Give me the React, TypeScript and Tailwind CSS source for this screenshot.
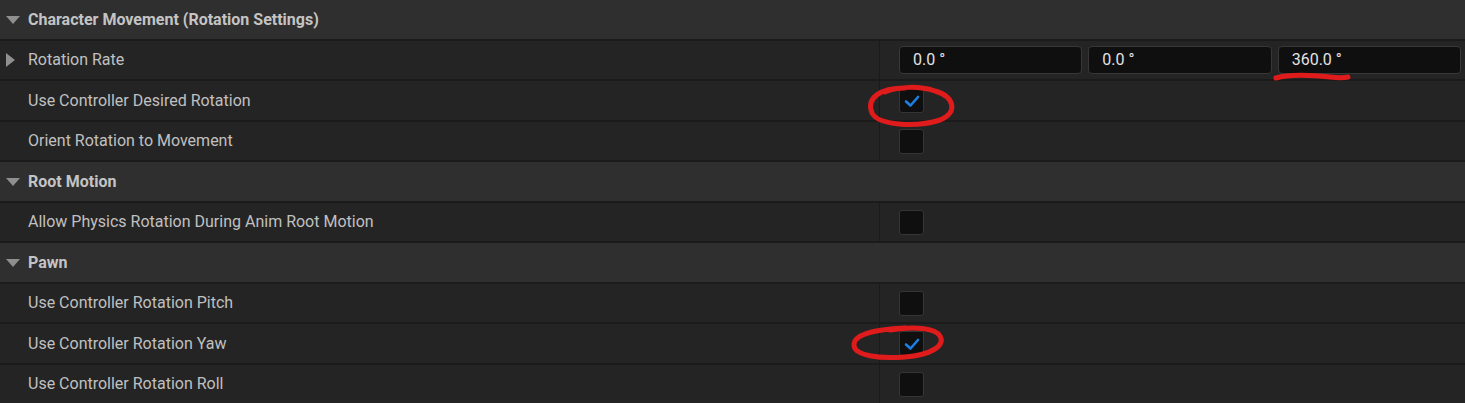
import React from "react";

const font = { fontFamily: "Roboto, 'Noto Sans', sans-serif" };

function DownTri() {
  return (
    <svg width="16" height="10" viewBox="0 0 16 10" className="shrink-0">
      <polygon points="1,1 15,1 8,9" fill="#8f8f8f" />
    </svg>
  );
}
function RightTri() {
  return (
    <svg width="10" height="16" viewBox="0 0 10 16" className="shrink-0">
      <polygon points="1,1 10,8 1,15" fill="#8f8f8f" />
    </svg>
  );
}

function Check({ checked }: { checked?: boolean }) {
  return (
    <div className="w-[25px] h-[25px] rounded-[3px] bg-[#0f0f0f] border border-[#353535] flex items-center justify-center">
      {checked && (
        <svg width="18" height="18" viewBox="0 0 18 18">
          <polyline points="3,9.5 7.5,13.5 15,5" fill="none" stroke="#1b7fe3" strokeWidth="2.6" strokeLinecap="round" strokeLinejoin="round" />
        </svg>
      )}
    </div>
  );
}

function Header({ label, h }: { label: string; h: string }) {
  return (
    <div className={`${h} bg-[#2f2f2f] border-b-2 border-[#1b1b1b] flex items-center`}>
      <div className="w-[28px] flex justify-center pl-[3px] pr-[6px]">
        <DownTri />
      </div>
      <span className="text-[16px] font-bold text-[#c4c4c4]">{label}</span>
    </div>
  );
}

function Row({ label, h, expander, children }: { label: string; h: string; expander?: boolean; children?: React.ReactNode }) {
  return (
    <div className={`${h} bg-[#242424] border-b-2 border-[#1b1b1b] flex`}>
      <div className="w-[880px] flex items-center border-r border-[#1a1a1a]">
        <div className="w-[28px] flex justify-start pl-[5px]">{expander && <RightTri />}</div>
        <span className="text-[16px] text-[#c0c0c0]">{label}</span>
      </div>
      <div className="flex-1 flex items-center pl-[19px] pr-[4px]">{children}</div>
    </div>
  );
}

function Field({ v }: { v: string }) {
  return (
    <div className="flex-1 h-[28px] rounded-[4px] bg-[#0f0f0f] border border-[#383838] flex items-center pl-[13px] text-[16px] text-[#e2e2e2]">
      {v}
    </div>
  );
}

export default function App() {
  return (
    <div className="relative w-[1465px] h-[403px] overflow-hidden bg-[#242424]" style={font}>
      <Header label="Character Movement (Rotation Settings)" h="h-[41px]" />
      <Row label="Rotation Rate" h="h-[40px]" expander>
        <div className="flex gap-[6px] w-full">
          <Field v="0.0 °" />
          <Field v="0.0 °" />
          <Field v="360.0 °" />
        </div>
      </Row>
      <Row label="Use Controller Desired Rotation" h="h-[41px]">
        <Check checked />
      </Row>
      <Row label="Orient Rotation to Movement" h="h-[40px]">
        <Check />
      </Row>
      <Header label="Root Motion" h="h-[41px]" />
      <Row label="Allow Physics Rotation During Anim Root Motion" h="h-[40px]">
        <Check />
      </Row>
      <Header label="Pawn" h="h-[41px]" />
      <Row label="Use Controller Rotation Pitch" h="h-[40px]">
        <Check />
      </Row>
      <Row label="Use Controller Rotation Yaw" h="h-[41px]">
        <Check checked />
      </Row>
      <Row label="Use Controller Rotation Roll" h="h-[40px]">
        <Check />
      </Row>

      <svg className="absolute left-0 top-0 pointer-events-none" width="1465" height="403" viewBox="0 0 1465 403">
        <path
          d="M905,88 C880,88 866,98 872,113 C878,125 915,128 940,120 C958,113 955,97 935,91 C920,86 900,86 885,92"
          fill="none"
          stroke="#e01b1b"
          strokeWidth="5"
          strokeLinecap="round"
        />
        <path
          d="M1276,78 C1290,74 1310,75 1330,77 C1338,78 1344,78 1348,77"
          fill="none"
          stroke="#e01b1b"
          strokeWidth="5"
          strokeLinecap="round"
        />
        <path
          d="M905,328 C880,329 855,333 854,344 C853,356 880,359 905,357 C930,355 946,346 940,336 C935,328 915,326 890,330"
          fill="none"
          stroke="#e01b1b"
          strokeWidth="5"
          strokeLinecap="round"
        />
      </svg>
    </div>
  );
}
